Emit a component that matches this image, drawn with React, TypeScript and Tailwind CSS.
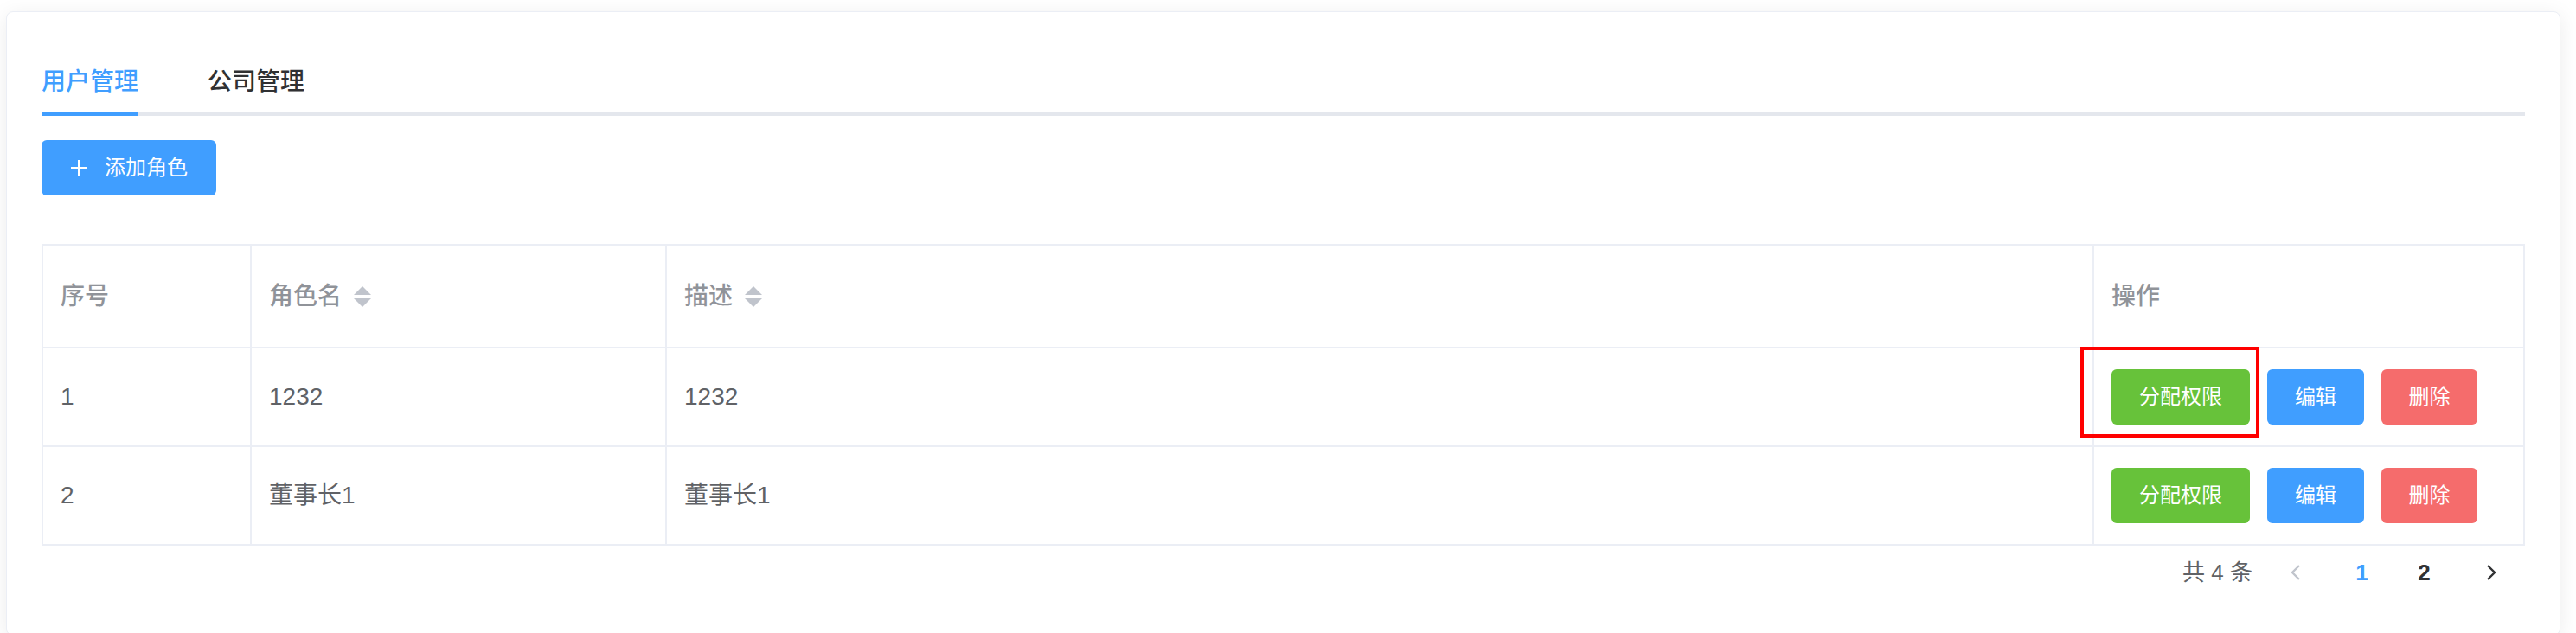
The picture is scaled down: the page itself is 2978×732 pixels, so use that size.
import { useState } from 'react';

interface Role {
  id: number;
  name: string;
  desc: string;
}

const roles: Role[] = [
  { id: 1, name: '1232', desc: '1232' },
  { id: 2, name: '董事长1', desc: '董事长1' },
];

const font = 'font-["Liberation_Sans","Noto_Sans_CJK_SC",sans-serif]';

const SortIcon = () => (
  <svg width="20" height="24" viewBox="0 0 20 24" className="ml-[14px] shrink-0">
    <polygon points="0,10 10,0 20,10" fill="#c0c4cc" />
    <polygon points="0,14 20,14 10,24" fill="#c0c4cc" />
  </svg>
);

const Chevron = ({ dir, color }: { dir: 'left' | 'right'; color: string }) => (
  <svg width="12" height="20" viewBox="0 0 12 20">
    <polyline
      points={dir === 'left' ? '10,2 2,10 10,18' : '2,2 10,10 2,18'}
      fill="none"
      stroke={color}
      strokeWidth="2.4"
    />
  </svg>
);

const App = () => {
  const [tab, setTab] = useState<'user' | 'company'>('user');
  const [page, setPage] = useState(1);

  return (
    <div className={`relative min-h-[732px] bg-white pl-[7px] pr-[18px] pt-[13px] ${font}`}>
      <div className="h-[722px] rounded-[8px] border border-[#ebeef5] bg-white px-[40px] pt-[40px] shadow-[0_4px_24px_rgba(0,0,0,0.08)]">
        {/* tabs */}
        <div className="relative flex h-[80px] border-b-[4px] border-[#e4e7ed]">
          <button
            onClick={() => setTab('user')}
            className={`relative h-[76px] pr-[40px] text-[28px] leading-[82px] font-medium ${tab === 'user' ? 'text-[#409eff]' : 'text-[#303133]'}`}
          >
            用户管理
            {tab === 'user' && <span className="absolute bottom-[-4px] left-0 h-[4px] w-[112px] bg-[#409eff]" />}
          </button>
          <button
            onClick={() => setTab('company')}
            className={`relative h-[76px] px-[40px] text-[28px] leading-[82px] font-medium ${tab === 'company' ? 'text-[#409eff]' : 'text-[#303133]'}`}
          >
            公司管理
            {tab === 'company' && <span className="absolute bottom-[-4px] left-[40px] h-[4px] w-[112px] bg-[#409eff]" />}
          </button>
        </div>

        <button className="mt-[28px] flex h-[64px] w-[202px] items-center rounded-[6px] bg-[#409eff] pl-[34px] text-[24px] text-white">
          <svg width="18" height="18" viewBox="0 0 18 18">
            <path d="M9 0v18M0 9h18" stroke="#fff" strokeWidth="2" />
          </svg>
          <span className="ml-[21px]">添加角色</span>
        </button>

        {/* table */}
        <table className="mt-[56px] w-full table-fixed border-collapse border-2 border-[#ebeef5] text-[28px]">
          <colgroup>
            <col className="w-[241px]" />
            <col className="w-[480px]" />
            <col className="w-[1650px]" />
            <col />
          </colgroup>
          <thead>
            <tr className="h-[119px] text-left font-medium text-[#909399]">
              <th className="border-2 border-[#ebeef5] pl-[20px] font-medium">序号</th>
              <th className="border-2 border-[#ebeef5] pl-[20px] font-medium">
                <div className="flex items-center">角色名<SortIcon /></div>
              </th>
              <th className="border-2 border-[#ebeef5] pl-[20px] font-medium">
                <div className="flex items-center">描述<SortIcon /></div>
              </th>
              <th className="border-2 border-[#ebeef5] pl-[20px] font-medium">操作</th>
            </tr>
          </thead>
          <tbody>
            {roles.map((r) => (
              <tr key={r.id} className="h-[114px] text-[#606266]">
                <td className="border-2 border-[#ebeef5] pl-[20px]">{r.id}</td>
                <td className="border-2 border-[#ebeef5] pl-[20px]">{r.name}</td>
                <td className="border-2 border-[#ebeef5] pl-[20px]">{r.desc}</td>
                <td className="border-2 border-[#ebeef5] pl-[20px]">
                  <div className="flex items-center gap-[20px] text-[24px] text-white">
                    <button className="h-[64px] w-[160px] rounded-[6px] bg-[#67c23a]">分配权限</button>
                    <button className="h-[64px] w-[112px] rounded-[6px] bg-[#409eff]">编辑</button>
                    <button className="h-[64px] w-[111px] rounded-[6px] bg-[#f56c6c]">删除</button>
                  </div>
                </td>
              </tr>
            ))}
          </tbody>
        </table>

        {/* pagination */}
        <div className="mt-[3px] flex h-[56px] items-center justify-end pr-[4px] text-[26px]">
          <span className="mr-[14px] text-[#606266]">共 4 条</span>
          <button
            onClick={() => setPage(1)}
            className="flex h-[56px] w-[71px] items-center justify-center"
          >
            <Chevron dir="left" color={page === 1 ? '#c0c4cc' : '#303133'} />
          </button>
          {[1, 2].map((p) => (
            <button
              key={p}
              onClick={() => setPage(p)}
              className={`h-[56px] w-[71px] font-bold ${p === 1 ? 'ml-[6px]' : 'ml-[1px]'} ${page === p ? 'text-[#409eff]' : 'text-[#303133]'}`}
            >
              {p}
            </button>
          ))}
          <button
            onClick={() => setPage(2)}
            className="ml-[6px] flex h-[56px] w-[71px] items-center justify-center"
          >
            <Chevron dir="right" color={page === 2 ? '#c0c4cc' : '#303133'} />
          </button>
        </div>
      </div>

      {/* annotation box around first 分配权限 */}
      <div className="pointer-events-none absolute left-[2405px] top-[401px] h-[105px] w-[207px] border-[4px] border-[#ff0000]" />
    </div>
  );
};

export default App;
